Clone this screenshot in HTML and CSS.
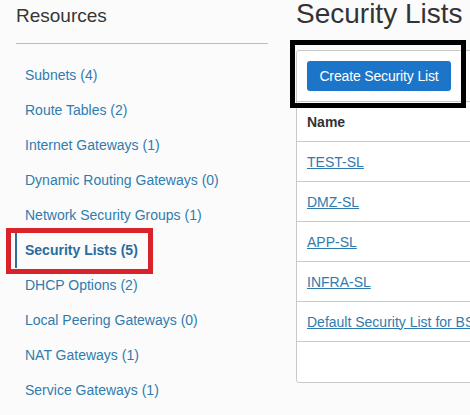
FILE: index.html
```html
<!DOCTYPE html>
<html lang="en">
<head>
<meta charset="utf-8">
<title>Security Lists</title>
<link rel="stylesheet" href="styles.css">
</head>
<body>
<div class="page">
  <aside class="sidebar">
    <h2 class="sidebar-title">Resources</h2>
    <hr class="divider">
    <ul class="nav">
      <li class="nav-item"><a href="#">Subnets (4)</a></li>
      <li class="nav-item"><a href="#">Route Tables (2)</a></li>
      <li class="nav-item"><a href="#">Internet Gateways (1)</a></li>
      <li class="nav-item"><a href="#">Dynamic Routing Gateways (0)</a></li>
      <li class="nav-item"><a href="#">Network Security Groups (1)</a></li>
      <li class="nav-item active"><a href="#">Security Lists (5)</a></li>
      <li class="nav-item"><a href="#">DHCP Options (2)</a></li>
      <li class="nav-item"><a href="#">Local Peering Gateways (0)</a></li>
      <li class="nav-item"><a href="#">NAT Gateways (1)</a></li>
      <li class="nav-item"><a href="#">Service Gateways (1)</a></li>
    </ul>
  </aside>
  <main class="content">
    <h1 class="page-title">Security Lists</h1>
    <div class="card">
      <div class="toolbar">
        <button class="btn-primary" type="button">Create Security List</button>
      </div>
      <table class="list-table">
        <thead>
          <tr><th>Name</th></tr>
        </thead>
        <tbody>
          <tr><td><a href="#">TEST-SL</a></td></tr>
          <tr><td><a href="#">DMZ-SL</a></td></tr>
          <tr><td><a href="#">APP-SL</a></td></tr>
          <tr><td><a href="#">INFRA-SL</a></td></tr>
          <tr><td><a href="#">Default Security List for BSCS-VCN</a></td></tr>
          <tr class="empty-row"><td></td></tr>
        </tbody>
      </table>
    </div>
  </main>
  <div class="annot annot-red"></div>
  <div class="annot annot-black"></div>
</div>
</body>
</html>
```

FILE: styles.css
```css
* { box-sizing: border-box; }

html, body {
  margin: 0;
  padding: 0;
  background: #fbfbfb;
  font-family: "Liberation Sans", Arial, sans-serif;
  color: #333;
  overflow: hidden;
}

.page {
  position: relative;
  display: grid;
  grid-template-columns: 268px 1fr;
  column-gap: 28px;
  width: 470px;
  height: 415px;
  overflow: hidden;
}

.sidebar {
  padding: 5px 0 0 16px;
}

.sidebar-title {
  margin: 0;
  font-size: 19px;
  line-height: 22px;
  font-weight: normal;
  color: #363636;
}

.divider {
  margin: 16px 0 0 0;
  border: 0;
  height: 1px;
  background: #bdbdbd;
}

.nav {
  list-style: none;
  margin: 14px 0 0 0;
  padding: 0;
}

.nav-item {
  height: 35px;
  line-height: 35px;
  font-size: 14px;
  padding-left: 9px;
}

.nav-item a {
  color: #307bae;
  text-decoration: none;
}

.nav-item.active {
  border-left: 2px solid #2d6e9c;
  margin-left: -1px;
  padding-left: 8px;
}

.nav-item.active a {
  font-weight: bold;
  color: #2a6b9b;
}

.content {
  min-width: 0;
  overflow: visible;
}

.page-title {
  margin: 0;
  font-size: 28px;
  line-height: 28px;
  font-weight: normal;
  color: #333;
  white-space: nowrap;
}

.card {
  margin-top: 22px;
  width: 420px;
  background: #fff;
  border: 1px solid #c9c9c9;
  border-radius: 3px;
}

.toolbar {
  padding: 10px;
  border-bottom: 1px solid #c9c9c9;
}

.btn-primary {
  display: block;
  height: 30px;
  width: 144px;
  padding: 0;
  border: 0;
  border-radius: 3px;
  background: #1c75c9;
  color: #fff;
  font-family: "Liberation Sans", Arial, sans-serif;
  font-size: 14px;
  letter-spacing: -0.15px;
}

.list-table {
  width: 100%;
  border-collapse: separate;
  border-spacing: 0;
}

.list-table th,
.list-table td {
  height: 40px;
  padding: 0 10px;
  text-align: left;
  vertical-align: middle;
  border-bottom: 1px solid #c9c9c9;
  font-size: 14px;
  white-space: nowrap;
}

.list-table th {
  font-weight: bold;
  color: #333;
}

.list-table td a {
  color: #307bae;
  text-decoration: underline;
}

.list-table .empty-row td {
  height: 40px;
  border-bottom: 0;
}

.annot {
  position: absolute;
  pointer-events: none;
}

.annot-red {
  left: 6px;
  top: 228px;
  width: 147px;
  height: 46px;
  border: 5px solid #d8232a;
}

.annot-black {
  left: 290px;
  top: 40px;
  width: 176px;
  height: 68px;
  border: 5px solid #000;
}
```
